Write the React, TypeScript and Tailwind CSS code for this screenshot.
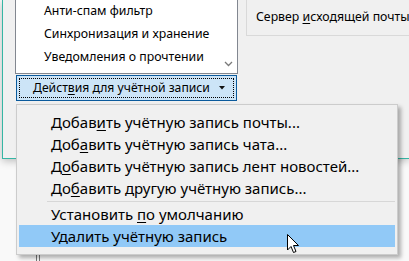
import React from "react";

const font = { fontFamily: '"Noto Sans", "Open Sans", sans-serif' };

function U({ children }: { children: React.ReactNode }) {
  return <span className="underline underline-offset-2 decoration-1">{children}</span>;
}

function MenuItem({ children, active }: { children: React.ReactNode; active?: boolean }) {
  return (
    <div
      className={
        "h-[22px] flex items-center pl-[32px] text-[15px] text-black whitespace-nowrap " +
        (active ? "bg-[#91c9f7]" : "")
      }
    >
      <span>{children}</span>
    </div>
  );
}

export default function App() {
  return (
    <div
      className="relative w-[409px] h-[261px] overflow-hidden bg-[#f9f9f9] text-black"
      style={font}
    >
      {/* dialog window */}
      <div className="ml-[2px] h-[159px] border-l border-b border-[#35b6a4] bg-[#f0f0f0] shadow-[0_2px_8px_rgba(0,0,0,0.25)] flex pl-[12px]">
        <div className="w-[223px] flex flex-col">
          <div className="h-[74px] border border-t-0 border-[#828790] bg-white relative flex flex-col">
            <div className="h-[22px] flex items-center pl-[28px] text-[12.3px] whitespace-nowrap">Анти-спам фильтр</div>
            <div className="h-[24px] flex items-center pl-[28px] text-[12.3px] whitespace-nowrap">Синхронизация и хранение</div>
            <div className="h-[23px] flex items-center pl-[28px] text-[12.3px] whitespace-nowrap">Уведомления о прочтении</div>
            <svg className="absolute right-[4px] bottom-[6px]" width="9" height="6" viewBox="0 0 9 6">
              <path d="M1 1 L4.5 4.5 L8 1" fill="none" stroke="#7a7a7a" strokeWidth="1.3" />
            </svg>
          </div>
          <div className="mt-[1px] ml-[1px] w-[221px] h-[26px] border border-[#0a5a9c] bg-[#cce4f7] p-[2px]">
            <div className="h-full border border-dotted border-black flex items-center pl-[13px] pr-[8px] text-[12.2px] whitespace-nowrap">
              <span className="flex-1">
                Дейст<U>в</U>ия для учётной записи
              </span>
              <svg width="6" height="4" viewBox="0 0 6 4">
                <path d="M0 0 H6 L3 3.5 Z" fill="#111" />
              </svg>
            </div>
          </div>
        </div>
        <div className="ml-[8px] flex-1 min-w-0 h-[36px] border border-t-0 border-r-0 border-[#d9d9d9] flex items-center pl-[9px] text-[12.3px] whitespace-nowrap">
          <span>
            Сервер <U>и</U>сходящей почты
          </span>
        </div>
      </div>

      {/* lines under the menu */}
      <div className="absolute left-[36px] top-[255px] w-[1px] h-[6px] bg-[#777]" />
      <div className="absolute left-[39px] top-[255px] w-[1px] h-[6px] bg-[#777]" />

      {/* dropdown menu */}
      <div className="absolute left-[16px] top-[104px] w-[382px] h-[151px] border border-[#cccccc] bg-[#f0f0f0] shadow-[3px_3px_4px_rgba(0,0,0,0.3)] px-[2px] pt-[6px]">
        <MenuItem>
          Добав<U>и</U>ть учётную запись почты...
        </MenuItem>
        <MenuItem>
          Доб<U>а</U>вить учётную запись чата...
        </MenuItem>
        <MenuItem>
          Д<U>о</U>бавить учётную запись лент новостей...
        </MenuItem>
        <MenuItem>
          До<U>б</U>авить другую учётную запись...
        </MenuItem>
        <div className="h-[4px] flex items-center pl-[28px]">
          <div className="h-[1px] w-full bg-[#d7d7d7]" />
        </div>
        <MenuItem>
          Установить <U>п</U>о умолчанию
        </MenuItem>
        <MenuItem active>Удалить учётную запись</MenuItem>
      </div>

      {/* mouse cursor */}
      <svg className="absolute left-[287px] top-[234px]" width="13" height="20" viewBox="0 0 13 20">
        <path
          d="M0.5 0.5 L0.5 16 L4 12.5 L6.5 18.5 L9 17.5 L6.5 11.5 L11.5 11.5 Z"
          fill="#fff"
          stroke="#000"
          strokeWidth="1"
          strokeLinejoin="miter"
        />
      </svg>
    </div>
  );
}
